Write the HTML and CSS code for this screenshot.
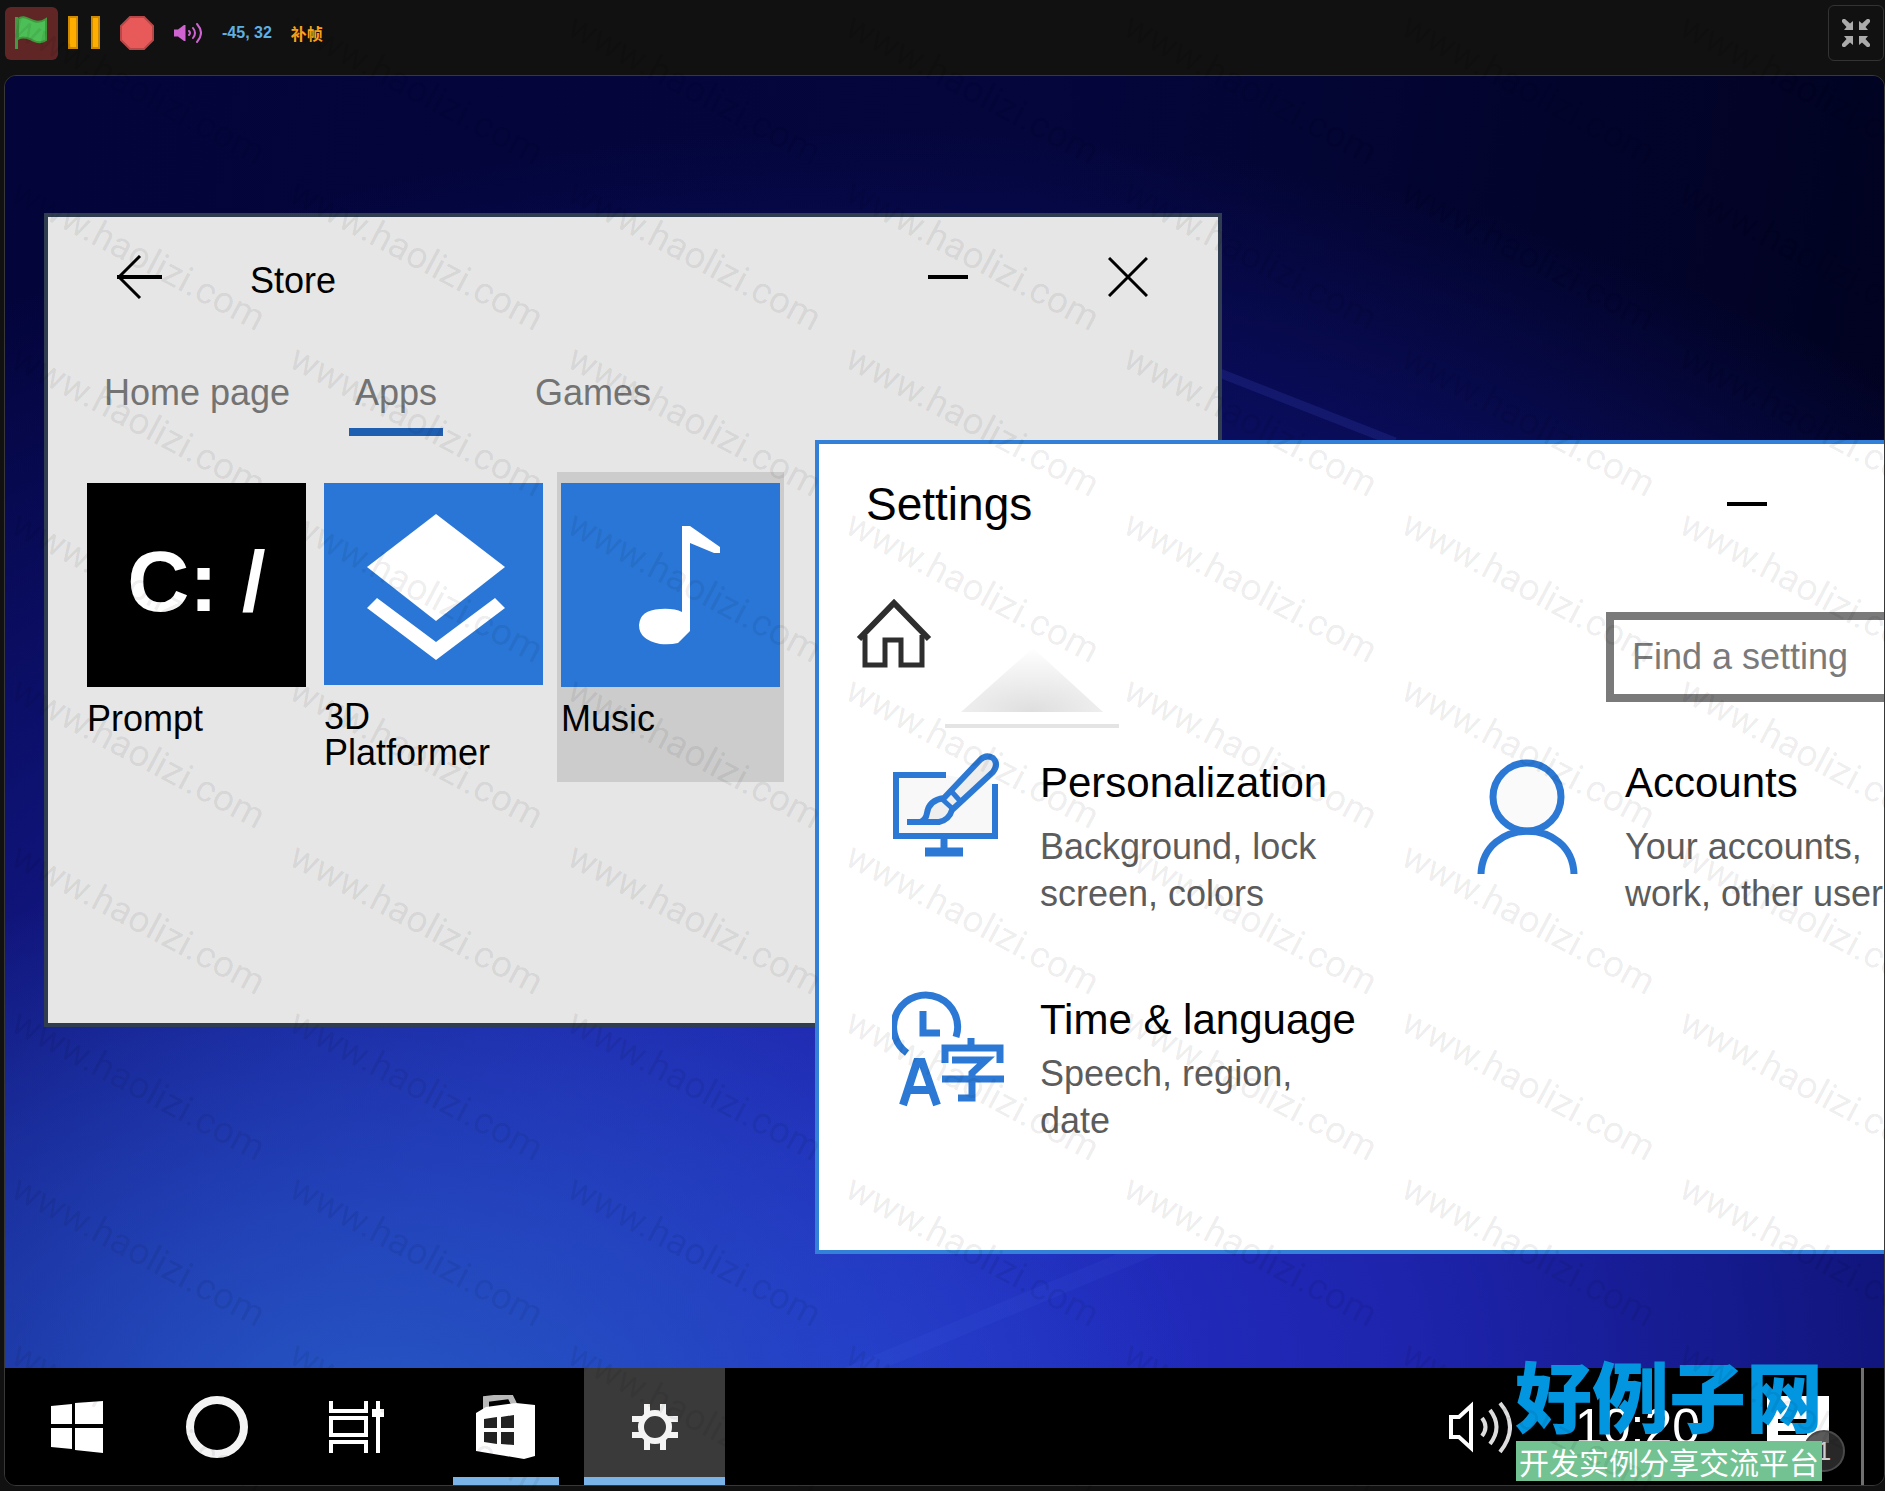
FILE: index.html
```html
<!DOCTYPE html>
<html lang="zh-CN">
  <head>
    <meta charset="UTF-8" />
    <meta name="viewport" content="width=device-width, initial-scale=1.0" />
    <title>Desktop</title>
    <link rel="stylesheet" href="styles.css" />
  </head>
  <body>
    <header class="toolbar">
      <button class="tool tool_flag" aria-label="Start">
        <svg width="33" height="34" viewBox="0 0 33 34">
          <path d="M3 3C8-1 13 3 19 5C24 7 28 5 31 3V24C26 28 20 26 15 23C10 21 6 21 3 23Z" fill="#4cbf56" stroke="#3f9a3c" stroke-width="2" />
          <path d="M1.500 1V33" stroke="#459945" stroke-width="3" />
        </svg>
      </button>
      <button class="tool" aria-label="Pause">
        <svg width="32" height="34" viewBox="0 0 32 34">
          <path d="M1 1H9V32H1ZM24 1H31V32H24Z" fill="#ffae00" stroke="#cf8b00" stroke-width="2" />
        </svg>
      </button>
      <button class="tool" aria-label="Stop">
        <svg width="34" height="34" viewBox="0 0 34 34">
          <path d="M10 1H24L33 10V24L24 33H10L1 24V10Z" fill="#e85a5a" stroke="#b84848" stroke-width="2" />
        </svg>
      </button>
      <button class="tool" aria-label="Sound">
        <svg width="28" height="22" viewBox="0 0 28 22" fill="none" stroke="#cf63cf" stroke-width="2" stroke-linecap="round">
          <path d="M0 7.500H4L10 3H11.500V19H10L4 14.500H0Z" fill="#cf63cf" stroke="none" />
          <path d="M15 9Q17 11 15 13M19 6Q23 11 19 16M23 2Q31 11 23 20" />
        </svg>
      </button>
      <span class="coords">-45, 32</span>
      <span class="frames">补帧</span>
      <button class="fullscreen" aria-label="Exit full screen">
        <svg width="28" height="28" viewBox="0 0 28 28" fill="#aaa">
          <path d="M1 0L3 0L8 4.500L11 2V11H2L4.500 8L0 3V1Z" />
          <path d="M1 0L3 0L8 4.500L11 2V11H2L4.500 8L0 3V1Z" transform="rotate(90 14 14)" />
          <path d="M1 0L3 0L8 4.500L11 2V11H2L4.500 8L0 3V1Z" transform="rotate(180 14 14)" />
          <path d="M1 0L3 0L8 4.500L11 2V11H2L4.500 8L0 3V1Z" transform="rotate(270 14 14)" />
        </svg>
      </button>
    </header>

    <main class="stage">
      <div class="desktop">
        <svg class="beams" width="100%" height="100%" fill="none">
          <path d="M1100 252L1390 366" stroke="#5a6aff" stroke-opacity="0.140" stroke-width="9" />
          <path d="M840 1300L1200 1150" stroke="#5a7aff" stroke-opacity="0.070" stroke-width="16" />
        </svg>

        <section class="window store">
          <div class="titlebar">
            <button class="plain" aria-label="Back">
              <svg width="48" height="44" viewBox="0 0 48 44" fill="none" stroke="#000" stroke-width="4">
                <path d="M2 22H47" />
                <path d="M25 1L4 22L25 43" stroke-width="3" />
              </svg>
            </button>
            <h1 class="store_title">Store</h1>
            <div class="controls">
              <button class="plain" aria-label="Minimize">
                <svg width="40" height="40"><path d="M0 20H40" stroke="#000" stroke-width="4" /></svg>
              </button>
              <button class="plain" aria-label="Close">
                <svg width="40" height="40" viewBox="0 0 40 40"><path d="M1 1L39 39M39 1L1 39" stroke="#000" stroke-width="3" /></svg>
              </button>
            </div>
          </div>
          <nav class="tabs">
            <a class="tab" href="#">Home page</a>
            <a class="tab active" href="#">Apps</a>
            <a class="tab" href="#">Games</a>
          </nav>
          <div class="apps">
            <button class="app">
              <span class="art prompt">C: /</span>
              <span class="app_name">Prompt</span>
            </button>
            <button class="app">
              <span class="art">
                <svg width="146" height="156" viewBox="-4 -6 146 156" fill="#fff">
                  <path d="M71 2L140 55L71 109L2 55Z" />
                  <path d="M12 86L71 130L130 86L140 96L71 148L2 96Z" />
                </svg>
              </span>
              <span class="app_name">3D<br />Platformer</span>
            </button>
            <button class="app selected">
              <span class="art">
                <svg width="102" height="120" viewBox="-18 0 102 120" fill="#fff">
                  <path d="M44 1H52L82 22V28H76L52 18V106L40 118Q32 120 22 119Q1 115 1 100Q2 85 22 84Q36 83 44 87Z" />
                </svg>
              </span>
              <span class="app_name">Music</span>
            </button>
          </div>
        </section>

        <section class="window settings">
          <svg class="ghost" width="178" height="82" viewBox="0 0 178 82">
            <defs>
              <radialGradient id="fade" cx="0.500" cy="1" r="1">
                <stop offset="0" stop-color="#dedede" />
                <stop offset="1" stop-color="#fff" />
              </radialGradient>
            </defs>
            <path d="M90 0L160 64H18Z" fill="url(#fade)" />
            <path d="M2 78H176" stroke="#e4e4e4" stroke-width="4" />
          </svg>
          <div class="titlebar">
            <h2 class="settings_title">Settings</h2>
            <div class="controls">
              <button class="plain" aria-label="Minimize">
                <svg width="40" height="40"><path d="M0 20H40" stroke="#000" stroke-width="4" /></svg>
              </button>
            </div>
          </div>
          <div class="search_row">
            <button class="plain" aria-label="Home">
              <svg width="78" height="72" viewBox="0 0 78 72" fill="none" stroke="#2e2e2e" stroke-width="5">
                <path d="M4 42L39 6L74 42" stroke-width="6" />
                <path d="M10 38V68H30V43H46V68H67V38" />
              </svg>
            </button>
            <input class="search" type="text" placeholder="Find a setting" aria-label="Find a setting" />
          </div>
          <div class="options">
            <a class="option" href="#">
              <svg width="116" height="120" viewBox="0 0 116 120" fill="none" stroke="#2b79d5" stroke-width="6">
                <path d="M54 23H4V84H103V32" fill="#f8f8f8" />
                <path d="M52 87V98" stroke-width="7" />
                <path d="M33 100H71" stroke-width="9" />
                <path d="M15 70H47Q57 68 60 58L101 20Q107 12 101 6Q94 2 88 8L52 46Q37 48 35 61Q34 68 28 70" fill="#eee" />
                <path d="M50 47L62 58M60 40L69 50" stroke-width="5" />
              </svg>
              <div class="option_text">
                <h3>Personalization</h3>
                <p>Background, lock<br />screen, colors</p>
              </div>
            </a>
            <a class="option" href="#">
              <svg width="116" height="124" viewBox="0 0 116 124" fill="none" stroke="#2b79d5" stroke-width="7">
                <circle cx="50" cy="45" r="34" fill="#fafafa" />
                <path d="M4 122C6 65 95 65 97 122" />
              </svg>
              <div class="option_text">
                <h3>Accounts</h3>
                <p>Your accounts,<br />work, other users</p>
              </div>
            </a>
            <a class="option" href="#">
              <svg width="116" height="124" viewBox="0 0 116 124" fill="none" stroke="#2b79d5" stroke-width="7">
                <path d="M15 64A32 32 0 1 1 64 48" />
                <path d="M31 22V44H48" />
                <path d="M11 116L25 73H30L45 116M16 101H40" stroke-width="8" />
                <path d="M79 49V58M53 74V59H108V74M60 71H94L80 84V109H66M50 90H112" stroke-width="7" />
              </svg>
              <div class="option_text compact">
                <h3>Time &amp; language</h3>
                <p>Speech, region,<br />date</p>
              </div>
            </a>
          </div>
        </section>
      </div>

      <footer class="taskbar">
        <div class="launchers">
          <button class="launcher" aria-label="Start menu">
            <svg width="52" height="52" viewBox="0 0 52 52" fill="#fff">
              <path d="M0 5L21 3V23H0ZM24 2L52 0V23H24ZM0 27H21V48L0 46ZM24 27H52V52L24 49Z" />
            </svg>
          </button>
          <button class="launcher" aria-label="Search">
            <svg width="64" height="64"><circle cx="32" cy="32" r="27" fill="none" stroke="#f4f4f4" stroke-width="8" /></svg>
          </button>
          <button class="launcher" aria-label="Task view">
            <svg width="56" height="52" viewBox="0 0 56 52" fill="none" stroke="#fff" stroke-width="4">
              <path d="M2 0V10H37V0M2 17H37V34H2ZM2 52V41H37V52M49 0V52" />
              <path d="M43 12H55" stroke-width="8" />
            </svg>
          </button>
          <button class="launcher open" aria-label="Store">
            <svg width="60" height="64" viewBox="0 0 60 64">
              <path d="M10 15V4L34 1L38 9" fill="none" stroke="#b9b9b9" stroke-width="6" />
              <path d="M0 18L10 12L40 8L59 10V61L48 64L0 56Z" fill="#fff" />
              <path d="M8 24L21 22V33H8ZM25 22L38 20V33H25ZM8 37H21V49L8 47ZM25 37H38V50L25 49Z" fill="#222" />
            </svg>
          </button>
          <button class="launcher current" aria-label="Settings">
            <svg width="48" height="48" viewBox="0 0 48 48" fill="none" stroke="#f4f4f4">
              <circle cx="24" cy="24" r="14" stroke-width="6" />
              <path d="M16 1V12M32 1V12M16 36V47M32 36V47M1 16H11M1 32H11M37 16H47M37 32H47" stroke-width="6" />
            </svg>
          </button>
        </div>
        <div class="tray">
          <svg width="63" height="56" viewBox="0 0 63 56" fill="none" stroke="#fff" stroke-width="4">
            <path d="M2 18H10L22 7V49L10 38H2Z" />
            <path d="M33 19Q40 28 33 37M41 11Q54 28 41 45M51 4Q71 28 51 53" stroke="#ddd" />
          </svg>
          <span class="clock">10:20</span>
          <div class="messages">
            <svg width="62" height="62" viewBox="0 0 62 62">
              <path d="M0 0H62V47H40L28 58V47H0Z" fill="#fff" />
              <path d="M11 25H40M11 37H40" stroke="#000" stroke-width="4" />
            </svg>
            <span class="badge">1</span>
          </div>
          <span class="show_desktop"></span>
        </div>
      </footer>
    </main>

    <div class="site_logo">
      <strong>好例子网</strong>
      <span>开发实例分享交流平台</span>
    </div>
    <div class="watermark" aria-hidden="true"></div>

    <script>
      // tile the watermark over the whole page
      const $watermark = document.querySelector(".watermark");
      const columns = Math.ceil(window.innerWidth / 278);
      const rows = Math.ceil(window.innerHeight / 166);
      $watermark.style.gridTemplateColumns = `repeat(${columns}, 278px)`;

      for (let i = 0; i < columns * rows; i++) {
        const mark = document.createElement("span");
        mark.textContent = "www.haolizi.com";
        $watermark.appendChild(mark);
      }
    </script>
  </body>
</html>
```

FILE: styles.css
```css
* {
  box-sizing: border-box;
}

body {
  margin: 0;
  height: 100vh;
  display: flex;
  flex-direction: column;
  overflow: hidden;
  position: relative;
  background-color: #111;
  font-family: "Liberation Sans", Arial, "Noto Sans CJK SC", sans-serif;
}

h1,
h2,
h3,
p {
  margin: 0;
  font-weight: 400;
}

button {
  border: none;
  padding: 0;
  background: none;
  font-family: inherit;
  cursor: pointer;
}

a {
  color: inherit;
  text-decoration: none;
}

svg {
  display: block;
  flex-shrink: 0;
}

/* toolbar */
.toolbar {
  height: 75px;
  padding: 5px 1px 14px 5px;
  display: flex;
  align-items: center;
}

.tool {
  margin-right: 20px;
}

.tool_flag {
  width: 53px;
  height: 53px;
  margin-right: 10px;
  display: flex;
  align-items: center;
  justify-content: center;
  background-color: #602626;
  border-radius: 6px;
}

.coords,
.frames {
  font-size: 16px;
  font-weight: 700;
  color: #5fb0e0;
}

.frames {
  margin-left: 19px;
  color: #ffa51a;
}

.fullscreen {
  width: 56px;
  height: 56px;
  margin-left: auto;
  display: flex;
  align-items: center;
  justify-content: center;
  border: 1px solid #333;
  border-radius: 6px;
}

/* stage */
.stage {
  flex: 1;
  margin: 0 0 5px 4px;
  display: flex;
  flex-direction: column;
  overflow: hidden;
  border: 1px solid #383838;
  border-radius: 12px;
}

.desktop {
  flex: 1;
  position: relative;
  overflow: hidden;
  background:
    radial-gradient(ellipse 44% 46% at 20% 106%, #2658c4, rgba(38, 88, 196, 0)),
    radial-gradient(ellipse 90% 96% at 46% 100%, #2430cc, #1e24ac 32%, #0d1170 68%, rgba(4, 5, 54, 0)),
    linear-gradient(100deg, #03043a, #04063c 50%, #01021c);
}

.beams {
  position: absolute;
  inset: 0;
}

.window {
  position: absolute;
  width: 1178px;
  height: 814px;
  border: 4px solid #303d50;
  color: #000;
}

.store {
  left: 39px;
  top: 137px;
  background-color: #e6e6e6;
}

.settings {
  left: 810px;
  top: 364px;
  background-color: #fff;
  border-color: #3280d8;
}

.titlebar {
  height: 120px;
  display: flex;
  align-items: center;
}

.store .titlebar {
  padding: 0 70px 0 67px;
}

.settings .titlebar {
  padding: 0 222px 0 47px;
}

.store_title {
  margin-left: 87px;
  padding-top: 8px;
  font-size: 36px;
}

.settings_title {
  font-size: 46px;
}

.controls {
  margin-left: auto;
  display: flex;
  gap: 140px;
}

.tabs {
  padding: 32px 0 0 50px;
  display: grid;
  grid-template-columns: 251px 180px auto;
  justify-items: start;
  justify-content: start;
}

.tab {
  padding: 0 6px 11px;
  font-size: 36px;
  line-height: 48px;
  color: #737373;
  border-bottom: 8px solid transparent;
}

.tab.active {
  border-color: #1f5fb2;
}

.apps {
  margin-top: 36px;
  padding-left: 35px;
  display: flex;
  gap: 10px;
}

.app {
  width: 227px;
  height: 310px;
  padding: 11px 4px;
  display: flex;
  flex-direction: column;
  text-align: left;
  color: #000;
}

.app.selected {
  background-color: #ccc;
}

.art {
  width: 100%;
  height: 204px;
  display: flex;
  align-items: center;
  justify-content: center;
  background-color: #2976d6;
}

.prompt {
  padding-bottom: 8px;
  background-color: #000;
  color: #fff;
  font-size: 86px;
  font-weight: 700;
}

.app_name {
  margin-top: 14px;
  font-size: 36px;
  line-height: 36px;
}

/* settings */
.ghost {
  position: absolute;
  left: 124px;
  top: 204px;
}

.search_row {
  padding: 33px 0 0 36px;
  display: flex;
  align-items: flex-start;
  justify-content: space-between;
}

.search {
  width: 383px;
  height: 90px;
  margin-top: 15px;
  padding: 0 18px;
  border: 8px solid #7a7a7a;
  background-color: #fff;
  font-family: inherit;
  font-size: 36px;
}

.search::placeholder {
  color: #7a7a7a;
}

.options {
  margin-top: 50px;
  padding-left: 73px;
  display: grid;
  grid-template-columns: 585px 1fr;
  grid-auto-rows: 237px;
}

.option {
  display: flex;
  gap: 32px;
}

.option_text {
  padding-top: 7px;
  white-space: nowrap;
}

.option h3 {
  font-size: 42px;
  line-height: 48px;
}

.option p {
  margin-top: 16px;
  font-size: 36px;
  line-height: 47px;
  color: #5c5c5c;
}

.option .compact p {
  margin-top: 6px;
}

/* taskbar */
.taskbar {
  height: 117px;
  padding: 0 20px 0 2px;
  display: flex;
  background-color: #000;
}

.launchers {
  display: grid;
  grid-template-columns: 140px 140px 140px 157px 141px;
}

.launcher {
  position: relative;
  display: flex;
  align-items: center;
  justify-content: center;
}

.launcher.current {
  background-color: #3a3a3a;
}

.launcher.open::after,
.launcher.current::after {
  content: "";
  position: absolute;
  bottom: 0;
  width: 106px;
  height: 8px;
  background-color: #7ab3e8;
}

.launcher.current::after {
  width: 100%;
}

.tray {
  margin-left: auto;
  display: flex;
  align-items: center;
}

.clock {
  margin: 0 67px 0 63px;
  font-size: 50px;
  color: #fff;
}

.messages {
  position: relative;
  margin-right: 32px;
}

.badge {
  position: absolute;
  right: -16px;
  bottom: -14px;
  width: 42px;
  height: 42px;
  border: 2px solid #4a4a4a;
  border-radius: 50%;
  background-color: rgba(50, 50, 50, 0.8);
  color: #ccc;
  font-size: 26px;
  line-height: 38px;
  text-align: center;
}

.show_desktop {
  width: 3px;
  height: 100%;
  background-color: #707070;
}

/* site logo and watermark lie over everything */
.site_logo {
  position: absolute;
  right: 62px;
  bottom: 10px;
  display: flex;
  flex-direction: column;
  align-items: center;
  gap: 8px;
  font-family: "Noto Sans CJK SC", sans-serif;
}

.site_logo strong {
  font-size: 77px;
  line-height: 78px;
  font-weight: 900;
  color: #0296e0;
}

.site_logo span {
  padding: 0 3px;
  font-size: 30px;
  line-height: 40px;
  color: #fff;
  background-color: #72c292;
}

.watermark {
  position: absolute;
  inset: 4px 0 0 9px;
  display: grid;
  grid-auto-rows: 166px;
  overflow: hidden;
  pointer-events: none;
  font-family: Roboto, sans-serif;
  font-size: 37px;
  line-height: 36px;
  color: rgba(0, 0, 0, 0.08);
}

.watermark span {
  height: 36px;
  transform: rotate(28deg);
  transform-origin: 0 30px;
}
```
